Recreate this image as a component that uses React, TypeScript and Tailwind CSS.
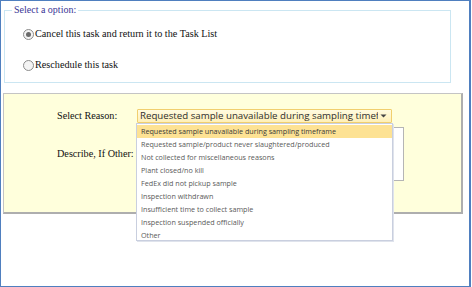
import React from "react";

const serif = { fontFamily: '"Liberation Serif", "Times New Roman", serif' };
const sans = { fontFamily: '"Open Sans", "Noto Sans", sans-serif' };

const options = [
  "Requested sample unavailable during sampling timeframe",
  "Requested sample/product never slaughtered/produced",
  "Not collected for miscellaneous reasons",
  "Plant closed/no kill",
  "FedEx did not pickup sample",
  "Inspection withdrawn",
  "Insufficient time to collect sample",
  "Inspection suspended officially",
  "Other",
];

function Radio({ checked }: { checked?: boolean }) {
  return (
    <span className="flex items-center justify-center w-[11px] h-[11px] rounded-full border border-[#8c8c8c] bg-[#f4f4f4] shrink-0">
      {checked && <span className="block w-[5px] h-[5px] rounded-full bg-[#6a6a6a]" />}
    </span>
  );
}

export default function App() {
  return (
    <div className="w-[472px] h-[287px] bg-white overflow-hidden" style={serif}>
      <div className="w-[471px] h-[287px] border-l border-t border-b border-r-2 border-[#4f7fbf] bg-white">
        <fieldset className="mt-[2px] ml-[3px] w-[447px] h-[80px] border border-[#cbe6f2]">
          <legend className="ml-[7px] px-[2px] text-[10px] leading-[14px] text-[#3b3696]">Select a option:</legend>
          <div className="pl-[18px] pt-[10px] flex flex-col gap-[17px] text-[10.2px] text-[#111]">
            <div className="flex items-center h-[14px]">
              <Radio checked />
              <span className="ml-[1px]">Cancel this task and return it to the Task List</span>
            </div>
            <div className="flex items-center h-[14px]">
              <Radio />
              <span className="ml-[1px]">Reschedule this task</span>
            </div>
          </div>
        </fieldset>
        <div className="mt-[10px] ml-[2px] w-[460px] h-[121px] bg-[#ffffdc] border-l border-t border-[#c4c4c4] border-r-2 border-b-2 border-r-[#aeaeae] border-b-[#aeaeae] pl-[53px] pt-[15px]">
          <div className="flex items-center h-[14px]">
            <div className="w-[80px] text-[10.2px] text-[#111]">Select Reason:</div>
            <div className="relative">
              <div
                className="w-[255px] h-[14px] border border-[#f1cf6e] bg-gradient-to-b from-[#fffbe0] to-[#fff0b8] flex items-center overflow-hidden rounded-[1px]"
                style={sans}
              >
                <span className="pl-[2px] text-[9.7px] leading-[12px] text-[#2e2e2e] whitespace-nowrap overflow-hidden w-[240px]">
                  Requested sample unavailable during sampling timeframe
                </span>
                <svg width="7" height="4" viewBox="0 0 7 4" className="ml-[2px]">
                  <path d="M0.5 0.5 L6.5 0.5 L3.5 3.5 Z" fill="#444" />
                </svg>
              </div>
              <div
                className="absolute left-[-1px] top-[14px] w-[257px] h-[118px] bg-white border border-[#c9cfdf] shadow-[1px_1px_0_#dfe3ec] z-10 pt-[1px]"
                style={sans}
              >
                {options.map((o, i) => (
                  <div
                    key={o}
                    className={`h-[13px] pl-[4px] flex items-center text-[7.2px] whitespace-nowrap ${
                      i === 0 ? "bg-[#fde294] text-[#3a3a3a]" : "text-[#5a5a5a]"
                    }`}
                  >
                    {o}
                  </div>
                ))}
              </div>
            </div>
          </div>
          <div className="flex items-center mt-[4px] h-[54px]">
            <div className="w-[80px] text-[10.2px] text-[#111]">Describe, If Other:</div>
            <div className="w-[267px] h-[54px] bg-white border border-[#b5b5b5]" />
          </div>
        </div>
      </div>
    </div>
  );
}
